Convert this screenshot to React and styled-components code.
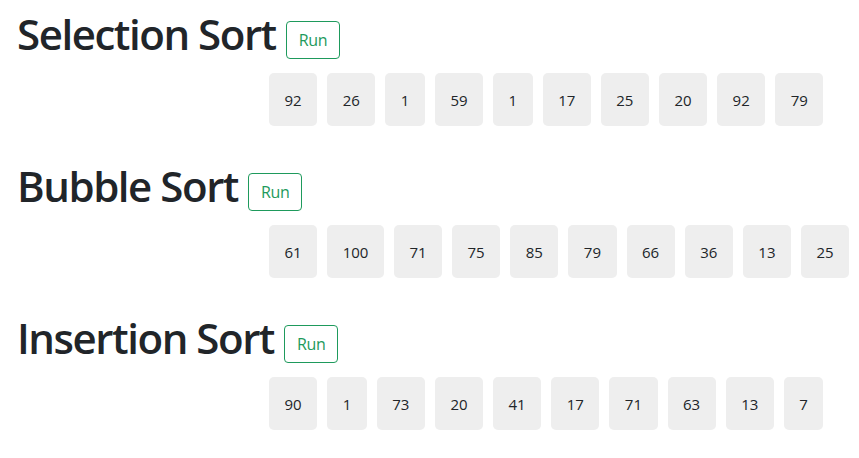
import React from "react";
import styled, { createGlobalStyle } from "styled-components";

const GlobalStyle = createGlobalStyle`
  body {
    margin: 0;
    background: #ffffff;
    font-family: "Open Sans", "Noto Sans", sans-serif;
    color: #212529;
  }
`;

const sorts = [
  { name: "Selection Sort", values: [92, 26, 1, 59, 1, 17, 25, 20, 92, 79] },
  { name: "Bubble Sort", values: [61, 100, 71, 75, 85, 79, 66, 36, 13, 25] },
  { name: "Insertion Sort", values: [90, 1, 73, 20, 41, 17, 71, 63, 13, 7] },
];

const Page = styled.div`
  display: flex;
  flex-direction: column;
  gap: 34px;
  padding: 8px 0 0 17px;
`;

const Section = styled.section`
  display: flex;
  flex-direction: column;
  gap: 13px;
`;

const Header = styled.div`
  display: flex;
  align-items: flex-end;
  gap: 10px;
`;

const Title = styled.h1`
  margin: 0;
  font-size: 42px;
  line-height: 52px;
  font-weight: 600;
  letter-spacing: -1.45px;
`;

const RunButton = styled.button`
  margin-bottom: 1px;
  padding: 6px 12px;
  font-family: inherit;
  font-size: 16px;
  line-height: 24px;
  letter-spacing: -0.4px;
  color: #1e9a5c;
  background: transparent;
  border: 1px solid #1e9a5c;
  border-radius: 4px;
  cursor: pointer;
`;

const Row = styled.div`
  display: flex;
  gap: 10px;
  padding-left: 252px;
`;

const Cell = styled.div`
  display: flex;
  align-items: center;
  justify-content: center;
  height: 53px;
  padding: 0 15.5px;
  background: #eeeeee;
  border-radius: 5px;
  font-size: 15px;
`;

export default function App() {
  return (
    <>
      <GlobalStyle />
      <Page>
        {sorts.map((sort) => (
          <Section key={sort.name}>
            <Header>
              <Title>{sort.name}</Title>
              <RunButton type="button">Run</RunButton>
            </Header>
            <Row>
              {sort.values.map((v, i) => (
                <Cell key={i}>{v}</Cell>
              ))}
            </Row>
          </Section>
        ))}
      </Page>
    </>
  );
}
